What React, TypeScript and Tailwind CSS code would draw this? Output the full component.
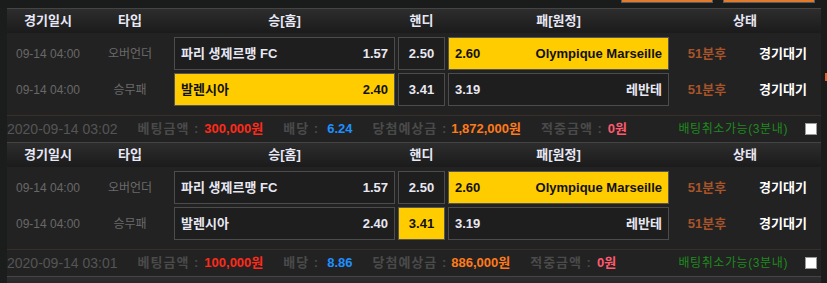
import React from 'react';

type Pick = 'home' | 'handi' | 'away';

interface Row {
    date: string;
    type: string;
    home: string;
    homeOdd: string;
    handi: string;
    awayOdd: string;
    away: string;
    pick: Pick;
}

interface Slip {
    rows: Row[];
    time: string;
    amount: string;
    odds: string;
    expected: string;
}

const slips: Slip[] = [
    {
        rows: [
            { date: '09-14 04:00', type: '오버언더', home: '파리 생제르맹 FC', homeOdd: '1.57', handi: '2.50', awayOdd: '2.60', away: 'Olympique Marseille', pick: 'away' },
            { date: '09-14 04:00', type: '승무패', home: '발렌시아', homeOdd: '2.40', handi: '3.41', awayOdd: '3.19', away: '레반테', pick: 'home' },
        ],
        time: '2020-09-14 03:02',
        amount: '300,000원',
        odds: '6.24',
        expected: '1,872,000원',
    },
    {
        rows: [
            { date: '09-14 04:00', type: '오버언더', home: '파리 생제르맹 FC', homeOdd: '1.57', handi: '2.50', awayOdd: '2.60', away: 'Olympique Marseille', pick: 'away' },
            { date: '09-14 04:00', type: '승무패', home: '발렌시아', homeOdd: '2.40', handi: '3.41', awayOdd: '3.19', away: '레반테', pick: 'handi' },
        ],
        time: '2020-09-14 03:01',
        amount: '100,000원',
        odds: '8.86',
        expected: '886,000원',
    },
];

function boxClass(active: boolean) {
    return active
        ? 'h-[33px] border border-[#555555] bg-[#ffcc00] text-[#111111]'
        : 'h-[33px] border border-[#4c4c4c] bg-[#1e1e1e] text-[#e8e8f2]';
}

function Header({ empty = false }: { empty?: boolean }) {
    return (
        <div className="flex h-[25px] shrink-0 items-center border-t border-[#444444] bg-gradient-to-b from-[#2d2d2d] to-[#1b1b1b] text-[13px] font-bold text-[#e8e8f6]">
            {!empty && (
                <>
                    <div className="w-[82px] text-center">경기일시</div>
                    <div className="w-[82px] text-center">타입</div>
                    <div className="ml-[3px] w-[221px] text-center">승[홈]</div>
                    <div className="ml-[3px] w-[47px] text-center">핸디</div>
                    <div className="ml-[3px] w-[221px] text-center">패[원정]</div>
                    <div className="w-[152px] text-center">상태</div>
                </>
            )}
        </div>
    );
}

function MatchRow({ row }: { row: Row }) {
    return (
        <div className="flex h-[33px] items-center">
            <div className="w-[82px] text-center text-[12px] text-[#686868]">{row.date}</div>
            <div className="w-[82px] text-center text-[12px] text-[#6a6a6a]">{row.type}</div>
            {/* Home */}
            <div className={`ml-[3px] flex w-[221px] items-center justify-between px-[6px] text-[13px] font-bold ${boxClass(row.pick === 'home')}`}>
                <span>{row.home}</span>
                <span>{row.homeOdd}</span>
            </div>
            {/* Handicap */}
            <div className={`ml-[3px] flex w-[47px] items-center justify-center text-[13px] font-bold ${boxClass(row.pick === 'handi')}`}>
                {row.handi}
            </div>
            {/* Away */}
            <div className={`ml-[3px] flex w-[221px] items-center justify-between px-[6px] text-[13px] font-bold ${boxClass(row.pick === 'away')}`}>
                <span>{row.awayOdd}</span>
                <span>{row.away}</span>
            </div>
            <div className="w-[76px] text-center text-[13px] font-bold text-[#a8542b]">51분후</div>
            <div className="w-[76px] text-center text-[13px] font-bold text-white">경기대기</div>
        </div>
    );
}

function SlipBlock({ slip }: { slip: Slip }) {
    return (
        <div className="flex shrink-0 flex-col">
            <Header />
            <div className="flex flex-col gap-[3px] pt-[4px] pb-[9px]">
                {slip.rows.map((r, i) => (
                    <MatchRow key={i} row={r} />
                ))}
            </div>
            {/* Footer summary */}
            <div className="flex h-[27px] items-center border-t border-[#3a3029] pr-[4px] text-[13px]">
                <span className="text-[14px] text-[#555555]">{slip.time}</span>
                <span className="ml-[20px] font-bold tracking-[1px] text-[#4a4a4a]">베팅금액 :</span>
                <span className="ml-[5px] font-bold text-[#ff2a1a]">{slip.amount}</span>
                <span className="ml-[20px] font-bold tracking-[1px] text-[#4a4a4a]">배당 :</span>
                <span className="ml-[8px] font-bold text-[#1e90ff]">{slip.odds}</span>
                <span className="ml-[20px] font-bold tracking-[1px] text-[#4a4a4a]">당첨예상금 :</span>
                <span className="ml-[4px] font-bold text-[#ff7a1a]">{slip.expected}</span>
                <span className="ml-[20px] font-bold tracking-[1px] text-[#4a4a4a]">적중금액 :</span>
                <span className="ml-[5px] font-bold text-[#ff5a6e]">0원</span>
                <span className="ml-auto text-[12px] tracking-[0.6px] text-[#1f8a1f]">배팅취소가능(3분내)</span>
                <span className="ml-[17px] h-[12px] w-[12px] border border-[#9a9a9a] bg-white" />
            </div>
        </div>
    );
}

export default function App() {
    return (
        <div className="flex h-[283px] w-[827px] flex-col overflow-hidden bg-[#1a1b1b] font-['Liberation_Sans','Noto_Sans_CJK_KR',sans-serif]">
            {/* Top bar with cut-off buttons */}
            <div className="flex h-[8px] shrink-0 justify-end gap-[10px] pr-[12px]">
                <div className="h-[3px] w-[92px] border-x border-b border-[#5a5a5a] bg-[#e07a2c]" />
                <div className="h-[3px] w-[92px] border-x border-b border-[#5a5a5a] bg-[#e07a2c]" />
            </div>
            <div className="flex flex-1">
                <div className="w-[7px] shrink-0 bg-[#1b1d1d]" />
                <div className="flex w-[814px] shrink-0 flex-col bg-[#222222]">
                    {slips.map((s, i) => (
                        <SlipBlock key={i} slip={s} />
                    ))}
                    <Header empty />
                </div>
                <div className="flex w-[6px] shrink-0 flex-col bg-[#1b1b1b]">
                    <div className="ml-[4px] mt-[65px] h-[8px] w-[2px] bg-[#e0602c]" />
                </div>
            </div>
        </div>
    );
}
